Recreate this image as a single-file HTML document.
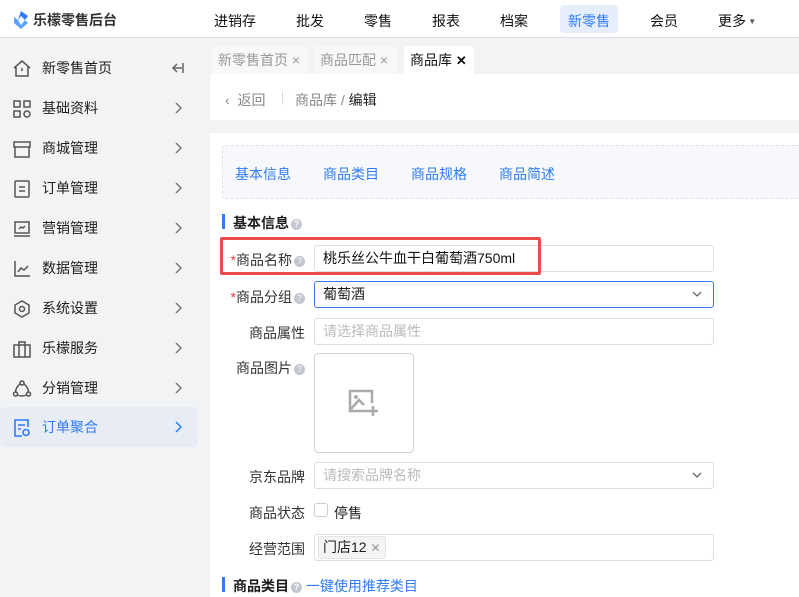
<!DOCTYPE html>
<html><head><meta charset="utf-8"><style>
*{margin:0;padding:0;box-sizing:border-box}
body{width:799px;height:597px;overflow:hidden;background:#f2f3f5;font-family:"Liberation Sans","Noto Sans CJK SC",sans-serif;font-size:14px;color:#1d1d1d;position:relative}
.a{position:absolute}
.hdr{left:0;top:0;width:799px;height:38px;background:#fff;border-bottom:1px solid #dcdde0}
.nav{top:11px;font-size:14px;color:#111}
.side{left:0;top:39px;width:210px;height:558px;background:#f2f3f5}
.mi{left:0;width:198px;height:40px;line-height:40px}
.mi .t{position:absolute;left:42px;font-size:14px}
.mi svg{position:absolute;left:12px;top:11px}
.mi svg.ar{left:174px;top:14px}
.tab{top:46px;height:28px;line-height:28px;background:#f7f8fa;color:#999;font-size:14px;padding-left:6px;border-radius:4px 4px 0 0}
.lbl{font-size:14px;color:#333;text-align:right;width:90px;left:215px}
.inp{left:314px;width:400px;height:27px;border:1px solid #dcdfe6;border-radius:3px;background:#fff;font-size:14px;line-height:25px;padding-left:8px}
.q{display:inline-block;width:11px;height:11px;border-radius:50%;background:#c2c6cf;color:#fff;font-size:9px;line-height:11px;text-align:center;vertical-align:1px;margin-left:2px}
.star{color:#e83c3c}
.chev{position:absolute;right:10px;top:6px}
</style></head><body>
<div class="a hdr"></div>
<svg class="a" style="left:12px;top:10px" width="18" height="20" viewBox="0 0 18 20"><path d="M9 1 L16 6 L13 10 L9 6 L6 10Z" fill="#2f7cf6"/><path d="M2 7 L6 10 L9 15 L13 10 L16 13 L9 19 L2 13Z" fill="#5aa3ff"/></svg>
<div class="a" style="left:33px;top:10px;font-size:14px;font-weight:bold;color:#333">乐檬零售后台</div>
<div class="a nav" style="left:214px">进销存</div>
<div class="a nav" style="left:296px">批发</div>
<div class="a nav" style="left:364px">零售</div>
<div class="a nav" style="left:432px">报表</div>
<div class="a nav" style="left:500px">档案</div>
<div class="a" style="left:560px;top:5px;width:58px;height:28px;background:#e6eefc;border-radius:4px"></div>
<div class="a nav" style="left:568px;color:#2f7cf6">新零售</div>
<div class="a nav" style="left:650px">会员</div>
<div class="a nav" style="left:718px">更多<span style="font-size:8px;color:#555;vertical-align:2px"> ▼</span></div>

<div class="a side"></div>
<div class="a mi" style="top:48px"><svg width="20" height="20" viewBox="0 0 20 20" fill="none" stroke="#555" stroke-width="1.5"><path d="M2 9 L10 2 L18 9 M4 8 V17 H16 V8 M10 9 V12"/></svg><span class="t">新零售首页</span><svg class="ar" style="left:171px" width="14" height="12" viewBox="0 0 14 12" fill="none" stroke="#666" stroke-width="1.5"><path d="M12 1 V11 M11 6 H2 M6 2 L2 6 L6 10"/></svg></div>
<div class="a mi" style="top:88px"><svg width="20" height="20" viewBox="0 0 20 20" fill="none" stroke="#555" stroke-width="1.5"><rect x="2" y="2" width="6" height="6"/><rect x="12" y="2" width="6" height="6"/><rect x="2" y="12" width="6" height="6"/><circle cx="15" cy="15" r="3"/></svg><span class="t">基础资料</span><svg class="ar" width="8" height="12" viewBox="0 0 8 12" fill="none" stroke="#777" stroke-width="1.5"><path d="M2 1 L7 6 L2 11"/></svg></div>
<div class="a mi" style="top:128px"><svg width="20" height="20" viewBox="0 0 20 20" fill="none" stroke="#555" stroke-width="1.5"><path d="M2 3 H18 V8 H2Z M3 8 V18 H17 V8"/></svg><span class="t">商城管理</span><svg class="ar" width="8" height="12" viewBox="0 0 8 12" fill="none" stroke="#777" stroke-width="1.5"><path d="M2 1 L7 6 L2 11"/></svg></div>
<div class="a mi" style="top:168px"><svg width="20" height="20" viewBox="0 0 20 20" fill="none" stroke="#555" stroke-width="1.5"><rect x="3" y="2" width="14" height="16" rx="1"/><path d="M7 8 H13 M7 12 H13"/></svg><span class="t">订单管理</span><svg class="ar" width="8" height="12" viewBox="0 0 8 12" fill="none" stroke="#777" stroke-width="1.5"><path d="M2 1 L7 6 L2 11"/></svg></div>
<div class="a mi" style="top:208px"><svg width="20" height="20" viewBox="0 0 20 20" fill="none" stroke="#555" stroke-width="1.5"><rect x="3" y="3" width="14" height="11"/><path d="M2 17 H18 M7 10 L9 8 L11 9 L13 7"/></svg><span class="t">营销管理</span><svg class="ar" width="8" height="12" viewBox="0 0 8 12" fill="none" stroke="#777" stroke-width="1.5"><path d="M2 1 L7 6 L2 11"/></svg></div>
<div class="a mi" style="top:248px"><svg width="20" height="20" viewBox="0 0 20 20" fill="none" stroke="#555" stroke-width="1.5"><path d="M3 2 V17 H18 M6 13 L9 9 L12 11 L16 7"/></svg><span class="t">数据管理</span><svg class="ar" width="8" height="12" viewBox="0 0 8 12" fill="none" stroke="#777" stroke-width="1.5"><path d="M2 1 L7 6 L2 11"/></svg></div>
<div class="a mi" style="top:288px"><svg width="20" height="20" viewBox="0 0 20 20" fill="none" stroke="#555" stroke-width="1.5"><path d="M10 2 L17 6 V14 L10 18 L3 14 V6Z"/><circle cx="10" cy="10" r="2.5"/></svg><span class="t">系统设置</span><svg class="ar" width="8" height="12" viewBox="0 0 8 12" fill="none" stroke="#777" stroke-width="1.5"><path d="M2 1 L7 6 L2 11"/></svg></div>
<div class="a mi" style="top:328px"><svg width="20" height="20" viewBox="0 0 20 20" fill="none" stroke="#555" stroke-width="1.5"><rect x="2" y="6" width="16" height="12"/><path d="M7 6 V3 H13 V6 M7 6 V18 M13 6 V18"/></svg><span class="t">乐檬服务</span><svg class="ar" width="8" height="12" viewBox="0 0 8 12" fill="none" stroke="#777" stroke-width="1.5"><path d="M2 1 L7 6 L2 11"/></svg></div>
<div class="a mi" style="top:368px"><svg width="20" height="20" viewBox="0 0 20 20" fill="none" stroke="#555" stroke-width="1.5"><circle cx="10" cy="4" r="2"/><circle cx="3.5" cy="15" r="2"/><circle cx="16.5" cy="15" r="2"/><path d="M8 5 Q4 8 3.5 13 M12 5 Q16 8 16.5 13 M5.5 16 Q10 18 14.5 16"/></svg><span class="t">分销管理</span><svg class="ar" width="8" height="12" viewBox="0 0 8 12" fill="none" stroke="#777" stroke-width="1.5"><path d="M2 1 L7 6 L2 11"/></svg></div>
<div class="a mi" style="top:407px;background:#e8ecf5;border-radius:6px"><svg width="20" height="20" viewBox="0 0 20 20" fill="none" stroke="#2f7cf6" stroke-width="1.6"><path d="M10 18 H3 V2 H16 V9"/><path d="M6 7 H13 M6 11 H9"/><circle cx="14" cy="14.5" r="3"/></svg><span class="t" style="color:#2f7cf6">订单聚合</span><svg class="ar" width="8" height="12" viewBox="0 0 8 12" fill="none" stroke="#2f7cf6" stroke-width="1.5"><path d="M2 1 L7 6 L2 11"/></svg></div>

<div class="a tab" style="left:212px;width:96px">新零售首页 ×</div>
<div class="a tab" style="left:314px;width:83px">商品匹配 ×</div>
<div class="a tab" style="left:404px;width:70px;background:#fff;color:#111">商品库 <b style="font-size:13px">✕</b></div>

<div class="a" style="left:210px;top:74px;width:589px;height:46px;background:#fff"></div>
<div class="a" style="left:210px;top:133px;width:589px;height:464px;background:#fff"></div>
<div class="a" style="left:225px;top:90px;color:#888;font-size:14px">‹&nbsp; 返回</div>
<div class="a" style="left:282px;top:91px;width:1px;height:14px;background:#ddd"></div>
<div class="a" style="left:295px;top:90px;color:#888">商品库 / <span style="color:#222">编辑</span></div>

<div class="a" style="left:222px;top:145px;width:590px;height:54px;border:1px dashed #dfe2e8;background:#f7f8fb;border-radius:4px"></div>
<div class="a" style="left:235px;top:164px;color:#2f7cf6">基本信息</div>
<div class="a" style="left:323px;top:164px;color:#2f7cf6">商品类目</div>
<div class="a" style="left:411px;top:164px;color:#2f7cf6">商品规格</div>
<div class="a" style="left:499px;top:164px;color:#2f7cf6">商品简述</div>

<div class="a" style="left:222px;top:214px;width:3px;height:15px;background:#2f7cf6"></div>
<div class="a" style="left:233px;top:213px;font-weight:bold">基本信息<span class="q">?</span></div>

<div class="a lbl" style="top:250px"><span class="star">*</span>商品名称<span class="q">?</span></div>
<div class="a inp" style="top:245px;color:#111">桃乐丝公牛血干白葡萄酒750ml</div>
<div class="a" style="left:220px;top:237px;width:321px;height:38px;border:3px solid #ec4b4b;border-radius:2px"></div>

<div class="a lbl" style="top:287px"><span class="star">*</span>商品分组<span class="q">?</span></div>
<div class="a inp" style="top:281px;border-color:#3a7bf0">葡萄酒<svg class="chev" width="12" height="12" viewBox="0 0 12 12"><path d="M2 4 L6 8 L10 4" fill="none" stroke="#666" stroke-width="1.3"/></svg></div>

<div class="a lbl" style="top:323px">商品属性</div>
<div class="a inp" style="top:318px;color:#bbb">请选择商品属性</div>

<div class="a lbl" style="top:358px">商品图片<span class="q">?</span></div>
<div class="a" style="left:314px;top:353px;width:100px;height:100px;border:1px solid #cfd2d8;border-radius:4px;background:#fff"></div>
<svg class="a" style="left:348px;top:389px" width="32" height="28" viewBox="0 0 32 28" fill="none" stroke="#aaa" stroke-width="2.5"><path d="M20 22 H2 V2 H24 V14"/><circle cx="8" cy="8" r="2" fill="#aaa" stroke="none"/><path d="M3 20 L11 11 L16 16"/><path d="M25 17 V27 M20 22 H30"/></svg>

<div class="a lbl" style="top:467px">京东品牌</div>
<div class="a inp" style="top:462px;color:#bbb">请搜索品牌名称<svg class="chev" width="12" height="12" viewBox="0 0 12 12"><path d="M2 4 L6 8 L10 4" fill="none" stroke="#666" stroke-width="1.3"/></svg></div>

<div class="a lbl" style="top:503px">商品状态</div>
<div class="a" style="left:314px;top:503px;width:14px;height:14px;border:1px solid #ccc;border-radius:3px;background:#fff"></div>
<div class="a" style="left:334px;top:503px">停售</div>

<div class="a lbl" style="top:539px">经营范围</div>
<div class="a inp" style="top:534px;padding-left:3px"><span style="display:inline-block;background:#f4f4f5;border:1px solid #e4e4e6;border-radius:3px;height:23px;line-height:21px;padding:0 4px;margin-top:1px">门店12 <span style="color:#999;font-size:12px">✕</span></span></div>

<div class="a" style="left:222px;top:577px;width:3px;height:15px;background:#2f7cf6"></div>
<div class="a" style="left:233px;top:576px;font-weight:bold">商品类目<span class="q">?</span> <span style="color:#2f7cf6;font-weight:normal">一键使用推荐类目</span></div>
</body></html>
